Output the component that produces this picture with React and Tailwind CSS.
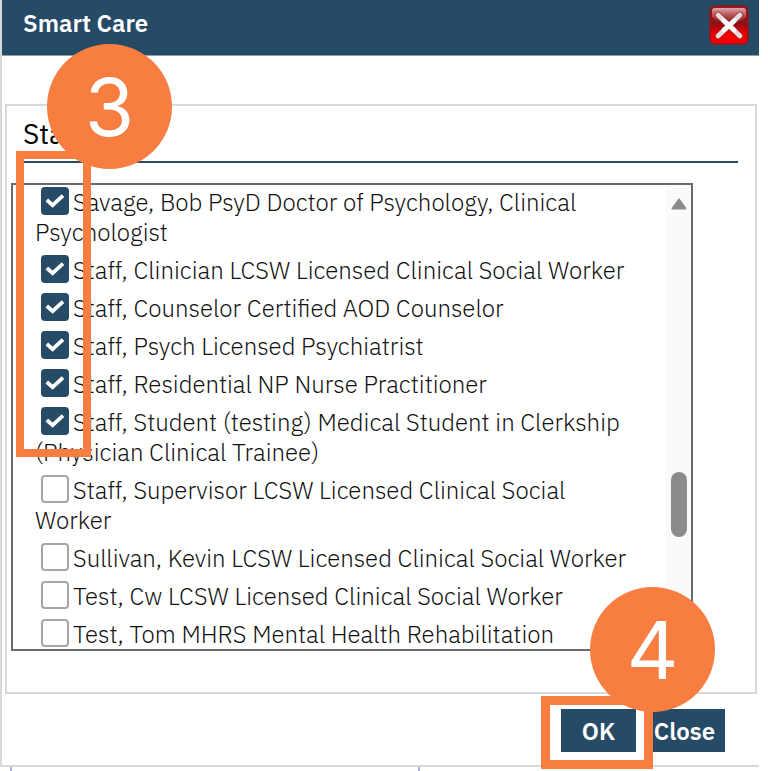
import React, { useState } from "react";

const STAFF = [
  { id: "savage", name: "Savage, Bob PsyD Doctor of Psychology, Clinical Psychologist", checked: true },
  { id: "clinician", name: "Staff, Clinician LCSW Licensed Clinical Social Worker", checked: true },
  { id: "counselor", name: "Staff, Counselor Certified AOD Counselor", checked: true },
  { id: "psych", name: "Staff, Psych Licensed Psychiatrist", checked: true },
  { id: "residential", name: "Staff, Residential NP Nurse Practitioner", checked: true },
  { id: "student", name: "Staff, Student (testing) Medical Student in Clerkship (Physician Clinical Trainee)", checked: true },
  { id: "supervisor", name: "Staff, Supervisor LCSW Licensed Clinical Social Worker", checked: false },
  { id: "sullivan", name: "Sullivan, Kevin LCSW Licensed Clinical Social Worker", checked: false },
  { id: "cw", name: "Test, Cw LCSW Licensed Clinical Social Worker", checked: false },
  { id: "tom", name: "Test, Tom MHRS Mental Health Rehabilitation", checked: false },
];

function CloseIcon() {
  return (
    <svg viewBox="0 0 40 40" className="block h-10 w-10" aria-hidden="true">
      <defs>
        <linearGradient id="closeRed" x1="0" y1="0" x2="0" y2="1">
          <stop offset="0" stopColor="#9c1a20" />
          <stop offset="0.48" stopColor="#8c1216" />
          <stop offset="0.58" stopColor="#c00306" />
          <stop offset="0.75" stopColor="#f00000" />
          <stop offset="1" stopColor="#f40000" />
        </linearGradient>
        <linearGradient id="closeShine" x1="0" y1="0" x2="0" y2="1">
          <stop offset="0" stopColor="#e4b0b3" stopOpacity="0.95" />
          <stop offset="1" stopColor="#a8383c" stopOpacity="0.3" />
        </linearGradient>
      </defs>
      <rect x="1" y="1" width="38" height="38" rx="5" fill="url(#closeRed)" stroke="#8a1a22" strokeWidth="1.5" />
      <path d="M3 6 Q3 3 6 3 H34 Q37 3 37 6 V12 Q30 18 20 18 Q10 18 3 12 Z" fill="url(#closeShine)" />
      <path d="M9 10 L31 31 M31 10 L9 31" stroke="#a03034" strokeWidth="7" strokeLinecap="round" opacity="0.6" />
      <path d="M9 10 L31 31 M31 10 L9 31" stroke="#e6dcdc" strokeWidth="4.6" strokeLinecap="round" />
      <path d="M15 16 L25 25 M25 16 L15 25" stroke="#ffffff" strokeWidth="4.6" strokeLinecap="round" />
    </svg>
  );
}

function StaffRow({ id, name, checked, onToggle }) {
  return (
    <li className="pt-[2px] pb-[6px] leading-[30px] last:pb-0">
      <span className="relative mr-1 ml-[6px] inline-block h-7 w-7 align-[-4px]">
        <input
          id={id}
          type="checkbox"
          checked={checked}
          onChange={onToggle}
          className="peer block h-7 w-7 appearance-none rounded-[4px] border-2 border-[#a6a6a6] bg-white checked:border-[#264b66] checked:bg-[#264b66]"
        />
        <svg
          viewBox="0 0 28 28"
          className="pointer-events-none absolute inset-0 hidden h-7 w-7 peer-checked:block"
          fill="none"
          stroke="white"
          strokeWidth="3.8"
          aria-hidden="true"
        >
          <path d="M5.8 13 L11.6 18.2 L22 8.6" />
        </svg>
      </span>
      <label htmlFor={id}>{name}</label>
    </li>
  );
}

function StepBadge({ children, className }) {
  return (
    <div
      className={`pointer-events-none absolute z-20 flex h-[125px] w-[125px] items-center justify-center rounded-full bg-[#f87d41] font-['Inter','Liberation_Sans',sans-serif] text-[80px] leading-none text-white ${className}`}
    >
      {children}
    </div>
  );
}

export default function App() {
  const [staff, setStaff] = useState(STAFF);

  const toggle = (id) =>
    setStaff(staff.map((s) => (s.id === id ? { ...s, checked: !s.checked } : s)));

  const buttonClass = "h-[43px] bg-[#264b66] text-[24px] font-semibold text-white";

  return (
    <div className="overflow-hidden bg-white pr-[9px] font-['IBM_Plex_Sans','Noto_Sans',sans-serif] text-[#111]">
      <div className="border-b-2 border-l-2 border-[#d9d9d9] bg-white">
        <header className="flex h-14 items-start justify-between border-b border-[#8d9daa] bg-[#264b66] pt-[5px] pr-[10px] pl-[21px]">
          <h1 className="pt-[3px] text-[24px] leading-[30px] font-semibold text-white">Smart Care</h1>
          <button type="button" aria-label="Close window">
            <CloseIcon />
          </button>
        </header>

        <main className="relative mt-12 mr-[2px] ml-[3px] border-2 border-[#d9d9d9] pr-[17px] pb-[41px] pl-1">
          <h2 className="ml-3 border-b-2 border-[#264b66] pt-[9px] pb-2 text-[28px] leading-[38px] font-normal text-black">
            Staff
          </h2>

          <div className="mt-5 mr-[45px] flex border-2 border-[#6b6b6b]">
            <ul className="min-w-0 flex-1 overflow-hidden pr-7 pl-[22px] text-[24px] font-light">
              {staff.map((s) => (
                <StaffRow key={s.id} {...s} onToggle={() => toggle(s.id)} />
              ))}
            </ul>
            <div className="flex w-[25px] flex-col items-center bg-[#fafafa] pt-[13px]">
              <svg viewBox="0 0 16 12" className="h-3 w-4 shrink-0" aria-hidden="true">
                <path d="M8 1.5 L14.5 10.5 H1.5 Z" fill="#8b8b8b" stroke="#8b8b8b" strokeWidth="2" strokeLinejoin="round" />
              </svg>
              <div className="mt-[262px] h-[65px] w-4 rounded-full bg-[#8b8b8b]" />
            </div>
          </div>

          <div className="pointer-events-none absolute top-[45px] left-[9px] z-10 h-[306px] w-[75px] border-8 border-[#f87d41]" />
          <StepBadge className="top-[-62px] left-[40px]">3</StepBadge>
        </main>

        <footer className="relative flex justify-end gap-2 pt-[15px] pr-[34px] pb-[13px]">
          <button type="button" className={`${buttonClass} w-[75px]`}>OK</button>
          <button type="button" className={`${buttonClass} w-[81px]`}>Close</button>
          <div className="pointer-events-none absolute top-[2px] right-[106px] z-10 h-[73px] w-[112px] border-[9px] border-[#f87d41]" />
          <StepBadge className="top-[-107px] right-[44px]">4</StepBadge>
        </footer>
      </div>

      <div className="flex h-1">
        <div className="ml-[10px] w-[408px] border-l-2 border-[#a9b0e0]" />
        <div className="flex-1 border-l-2 border-[#a9b0e0]" />
      </div>
    </div>
  );
}
